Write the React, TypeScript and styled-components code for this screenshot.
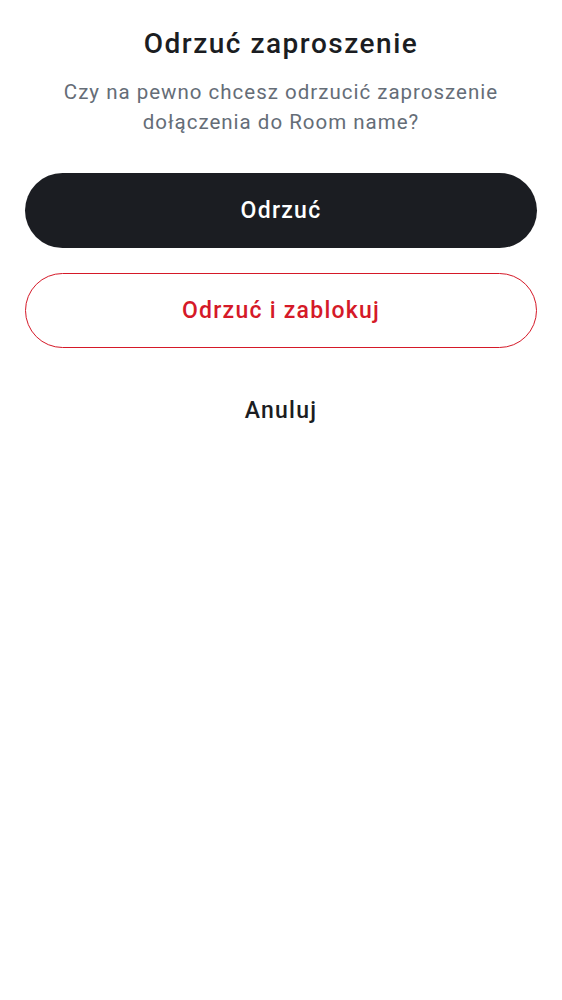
import React from "react";
import styled, { createGlobalStyle } from "styled-components";

const Global = createGlobalStyle`
  html, body { margin: 0; padding: 0; background: #ffffff; }
  body { font-family: Roboto, "Noto Sans", sans-serif; }
  * { box-sizing: border-box; }
`;

const Page = styled.div`
  display: flex;
  flex-direction: column;
  align-items: stretch;
  padding: 26px 25px 0 25px;
`;

const Title = styled.h1`
  margin: 0;
  font-size: 28px;
  line-height: 36px;
  font-weight: 500;
  letter-spacing: 1.5px;
  color: #1b1d22;
  text-align: center;
`;

const Subtitle = styled.p`
  margin: 15px 0 0 0;
  font-size: 20.5px;
  line-height: 30px;
  font-weight: 400;
  letter-spacing: 1px;
  color: #656d77;
  text-align: center;
`;

const Actions = styled.div`
  display: flex;
  flex-direction: column;
  gap: 25px;
  margin-top: 36px;
`;

const Button = styled.button<{ $variant: "primary" | "danger" | "text" }>`
  height: 75px;
  width: 100%;
  border-radius: 38px;
  font-family: Roboto, "Noto Sans", sans-serif;
  font-size: 23px;
  font-weight: 500;
  letter-spacing: 1.25px;
  cursor: pointer;
  display: flex;
  align-items: center;
  justify-content: center;
  background: ${(p) => (p.$variant === "primary" ? "#1b1d22" : "#ffffff")};
  color: ${(p) =>
    p.$variant === "primary" ? "#ffffff" : p.$variant === "danger" ? "#d51928" : "#1b1d22"};
  border: ${(p) => (p.$variant === "danger" ? "1.5px solid #d51928" : "none")};
`;

export default function App() {
  return (
    <>
      <Global />
      <Page>
        <Title>Odrzuć zaproszenie</Title>
        <Subtitle>
          Czy na pewno chcesz odrzucić zaproszenie
          <br />
          dołączenia do Room name?
        </Subtitle>
        <Actions>
          <Button $variant="primary">Odrzuć</Button>
          <Button $variant="danger">Odrzuć i zablokuj</Button>
          <Button $variant="text">Anuluj</Button>
        </Actions>
      </Page>
    </>
  );
}
